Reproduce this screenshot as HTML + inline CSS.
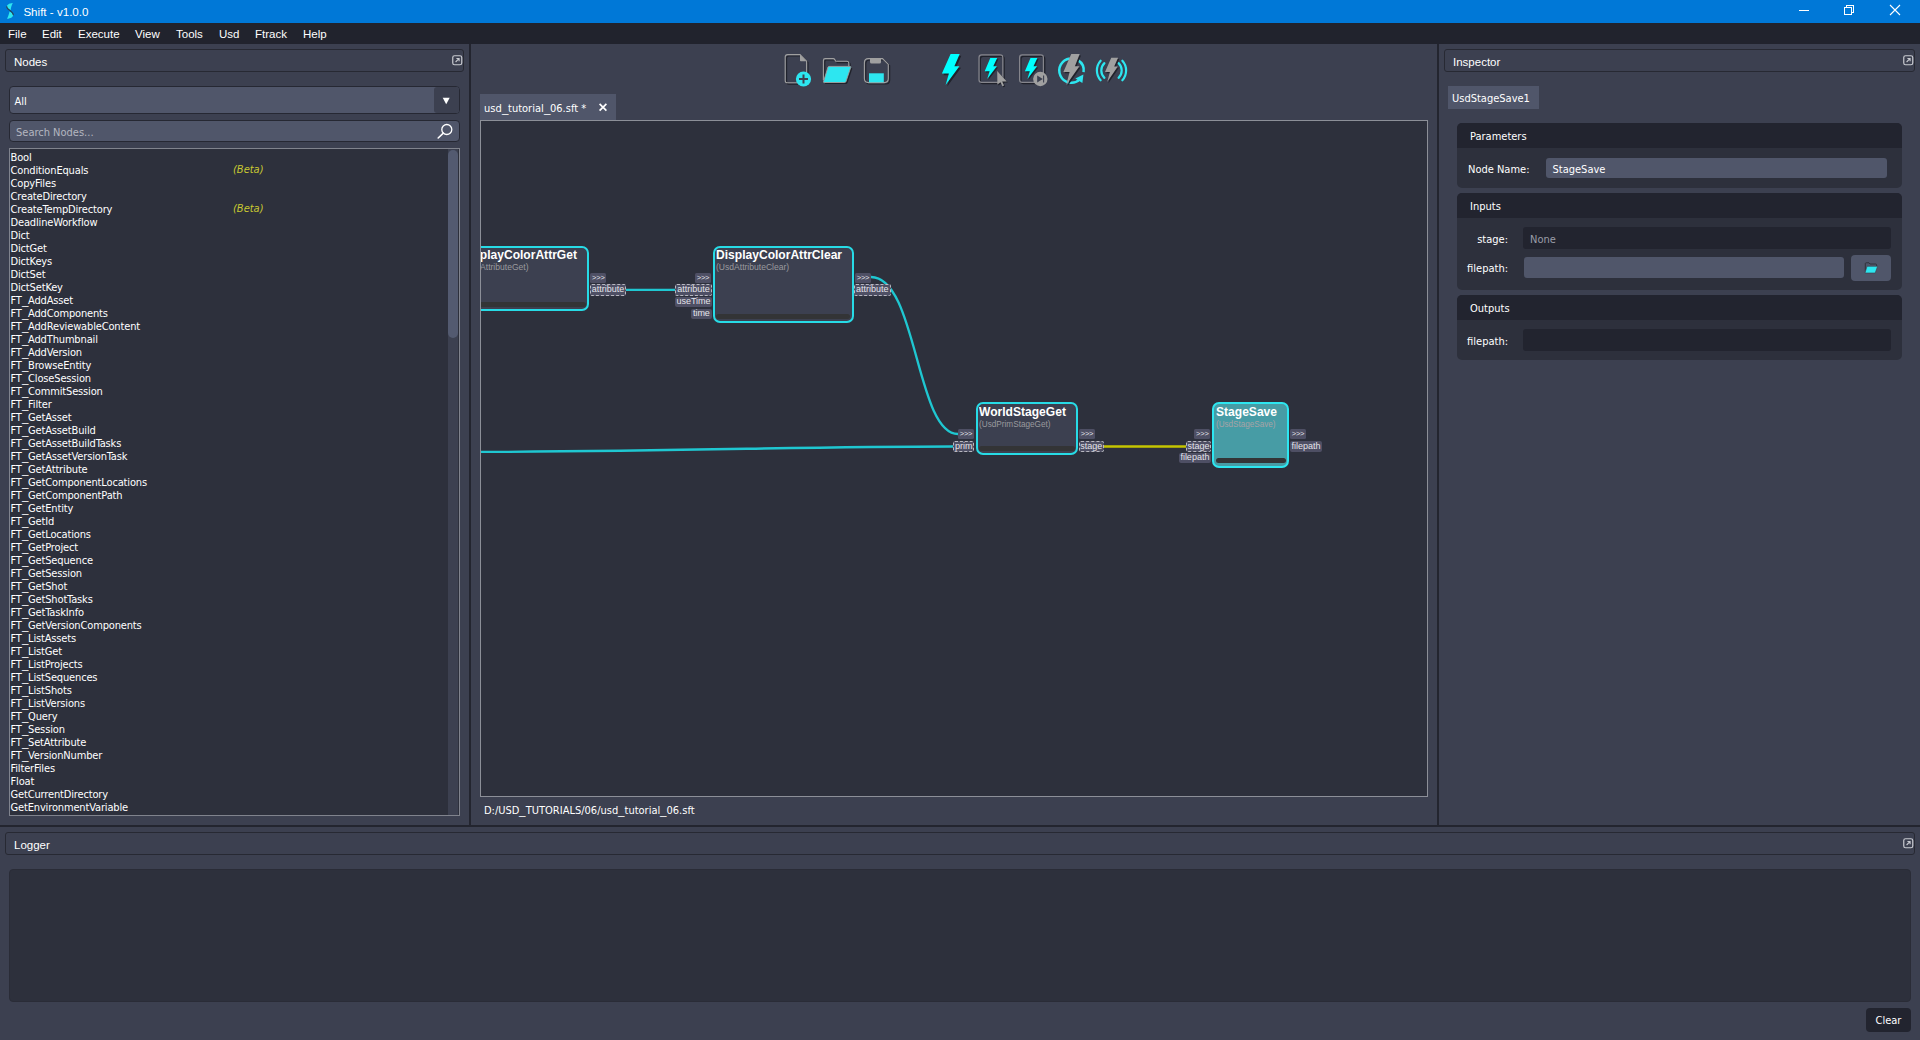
<!DOCTYPE html>
<html>
<head>
<meta charset="utf-8">
<title>Shift - v1.0.0</title>
<style>
*{box-sizing:border-box;margin:0;padding:0}
html,body{width:1920px;height:1040px;overflow:hidden;background:#3c4050}
body{position:relative;font-family:"DejaVu Sans Condensed","Liberation Sans",sans-serif;font-size:11px;color:#fff;line-height:13px}
.abs{position:absolute}
#titlebar{left:0;top:0;width:1920px;height:23px;background:#0078d7}
#titlebar .t{left:23.4px;top:0px;height:23px;line-height:23px;font-size:11.6px;font-family:"Liberation Sans",sans-serif;color:#fff;white-space:nowrap}
#menubar{left:0;top:23px;width:1920px;height:21px;background:#21232d}
#menubar span{position:absolute;top:0;height:21px;line-height:22px;font-family:"Liberation Sans",sans-serif;font-size:11.5px;color:#fff}
.dockhdr{border:1px solid #272933;border-radius:3px;background:#3c4050;height:23px}
.dockhdr .t{position:absolute;left:8px;top:1.5px;line-height:21px;font-family:"Liberation Sans",sans-serif;font-size:11.5px}
.vsep{background:#23252f;width:2px}
.hsep{background:#23252f;height:2px}
#nodelist{left:9px;top:148px;width:451px;height:668px;background:#2d303c;border:1px solid #80838d;overflow:hidden}
#nodelist div.r{position:absolute;left:0.5px;height:13px;line-height:13px;white-space:nowrap;letter-spacing:-0.15px}
#nodelist .beta{position:absolute;left:223px;color:#c8c832;font-style:italic;height:13px;line-height:13px}
.u{display:inline-block;width:6.3px;transform:scaleX(1.3);transform-origin:0 0;letter-spacing:0}
.grp{background:#2d303c;border-radius:5px;overflow:hidden}
.gh{position:absolute;left:0;top:0;right:0;height:25px;background:#22242f;line-height:27px;padding-left:13px}
.lbl{white-space:nowrap}
.inp{background:#50566a;border-radius:3px}
.inp span{position:absolute;left:6.5px;top:2px;line-height:19px}
.ro{background:#22242f;border-radius:3px}
.ro span{position:absolute;left:7px;top:1px;line-height:23px;color:#9a9da8}
#graph{left:481px;top:121px;width:946px;height:675px;overflow:hidden;font-family:"Liberation Sans",sans-serif}
.node{position:absolute;border-radius:7px;overflow:hidden}
.nt{position:absolute;top:0px;font-weight:bold;font-size:13px;line-height:15px;white-space:nowrap;color:#fff;transform:scaleX(.928);transform-origin:0 0}
.ns{position:absolute;top:14px;font-size:9.5px;line-height:12px;white-space:nowrap;transform-origin:0 0}
.nb{position:absolute;left:1.5px;right:1.5px;bottom:2.5px;height:5px;background:#333436;border-radius:2.5px}
.pt{position:absolute;background:#4e4f64;border-radius:2px;font-size:9px;text-align:center;white-space:nowrap;color:#e4e4ea}
.pa{position:absolute;background:#4e4f64;border-radius:1.5px;font-size:7.5px;text-align:center;white-space:nowrap;color:#e4e4ea;letter-spacing:-0.2px}
</style>
</head>
<body>

<div id="titlebar" class="abs">
<svg class="abs" style="left:4px;top:1px" width="14" height="20" viewBox="4 1 14 20"><path d="M12.8 2.9 C9 3.1 6.4 5 6.9 7.2 C7.6 9.2 9.8 9.9 10.6 10.3 C10.9 7.6 11.6 5.4 12.8 2.9 Z" fill="#2de6f0"/><path d="M7 18.7 C10.6 18.5 13.7 16.6 13.2 14.4 C12.7 12.6 10.6 11.9 9.5 11.4 C9.1 13.9 8.3 16.1 7 18.7 Z" fill="#2de6f0"/><path d="M6.7 6.2 C6.3 9.8 13.2 10.8 13.4 15.2" fill="none" stroke="#26435c" stroke-width="1.1"/></svg>
<div class="t abs">Shift - v1.0.0</div>
<svg class="abs" style="left:1790px;top:0" width="130" height="23" viewBox="1790 0 130 23" shape-rendering="crispEdges"><path d="M1799 10.5 H1809" stroke="#fff" stroke-width="1"/><path d="M1846.5 7 V5.5 H1853.5 V12.5 H1852" fill="none" stroke="#fff" stroke-width="1"/><rect x="1844.5" y="7.5" width="7" height="7" fill="none" stroke="#fff" stroke-width="1"/><path d="M1890 5 L1900 15 M1900 5 L1890 15" stroke="#fff" stroke-width="1.1" shape-rendering="geometricPrecision"/></svg>
</div>
<div id="menubar" class="abs">
<span style="left:8px">File</span><span style="left:42px">Edit</span><span style="left:78px">Execute</span><span style="left:135px">View</span><span style="left:176px">Tools</span><span style="left:219px">Usd</span><span style="left:255px">Ftrack</span><span style="left:303px">Help</span>
</div>
<div class="abs dockhdr" style="left:5px;top:49px;width:459px"><span class="t">Nodes</span></div>
<svg class="abs" style="left:452px;top:55px" width="11" height="11" viewBox="0 0 11 11"><rect x="0.75" y="0.75" width="9" height="9" rx="1.8" fill="none" stroke="#c8cad0" stroke-width="1.2"/><path d="M3.6 7 L6.9 3.7 M4.4 3.5 H7.1 V6.2" fill="none" stroke="#c8cad0" stroke-width="1.1"/></svg>
<div class="abs vsep" style="left:469px;top:44px;height:782px"></div>
<div class="abs vsep" style="left:1437px;top:44px;height:782px"></div>
<div class="abs hsep" style="left:0;top:825px;width:1920px"></div>
<div class="abs" style="left:9px;top:86px;width:451px;height:28px;background:#50566a;border:1px solid #262833;border-radius:4px;overflow:hidden">
<div class="abs" style="left:4.5px;top:1px;line-height:27px">All</div>
<div class="abs" style="left:424px;top:0;width:26px;height:26px;background:#3c4050;border-radius:3px"></div>
<svg class="abs" style="left:432.3px;top:10px" width="9" height="8" viewBox="0 0 9 8"><path d="M0.7 0.8 L7.7 0.8 L4.2 7.2 Z" fill="#fff"/></svg>
</div>
<div class="abs" style="left:9px;top:120px;width:451px;height:22px;background:#50566a;border:1px solid #262833;border-radius:4px">
<div class="abs" style="left:6px;top:1px;line-height:21px;color:#b4b7c0">Search Nodes...</div>
<svg class="abs" style="left:425px;top:1px" width="20" height="18" viewBox="0 0 20 18"><circle cx="11.8" cy="7.5" r="5" fill="none" stroke="#fff" stroke-width="1.3"/><path d="M8.3 11.2 L3.2 16" stroke="#fff" stroke-width="1.6" stroke-linecap="round"/></svg>
</div>
<div id="nodelist" class="abs">
<div class="r" style="top:2px">Bool</div>
<div class="r" style="top:15px">ConditionEquals</div>
<div class="beta" style="top:14px">(Beta)</div>
<div class="r" style="top:28px">CopyFiles</div>
<div class="r" style="top:41px">CreateDirectory</div>
<div class="r" style="top:54px">CreateTempDirectory</div>
<div class="beta" style="top:53px">(Beta)</div>
<div class="r" style="top:67px">DeadlineWorkflow</div>
<div class="r" style="top:80px">Dict</div>
<div class="r" style="top:93px">DictGet</div>
<div class="r" style="top:106px">DictKeys</div>
<div class="r" style="top:119px">DictSet</div>
<div class="r" style="top:132px">DictSetKey</div>
<div class="r" style="top:145px">FT<span class="u">_</span>AddAsset</div>
<div class="r" style="top:158px">FT<span class="u">_</span>AddComponents</div>
<div class="r" style="top:171px">FT<span class="u">_</span>AddReviewableContent</div>
<div class="r" style="top:184px">FT<span class="u">_</span>AddThumbnail</div>
<div class="r" style="top:197px">FT<span class="u">_</span>AddVersion</div>
<div class="r" style="top:210px">FT<span class="u">_</span>BrowseEntity</div>
<div class="r" style="top:223px">FT<span class="u">_</span>CloseSession</div>
<div class="r" style="top:236px">FT<span class="u">_</span>CommitSession</div>
<div class="r" style="top:249px">FT<span class="u">_</span>Filter</div>
<div class="r" style="top:262px">FT<span class="u">_</span>GetAsset</div>
<div class="r" style="top:275px">FT<span class="u">_</span>GetAssetBuild</div>
<div class="r" style="top:288px">FT<span class="u">_</span>GetAssetBuildTasks</div>
<div class="r" style="top:301px">FT<span class="u">_</span>GetAssetVersionTask</div>
<div class="r" style="top:314px">FT<span class="u">_</span>GetAttribute</div>
<div class="r" style="top:327px">FT<span class="u">_</span>GetComponentLocations</div>
<div class="r" style="top:340px">FT<span class="u">_</span>GetComponentPath</div>
<div class="r" style="top:353px">FT<span class="u">_</span>GetEntity</div>
<div class="r" style="top:366px">FT<span class="u">_</span>GetId</div>
<div class="r" style="top:379px">FT<span class="u">_</span>GetLocations</div>
<div class="r" style="top:392px">FT<span class="u">_</span>GetProject</div>
<div class="r" style="top:405px">FT<span class="u">_</span>GetSequence</div>
<div class="r" style="top:418px">FT<span class="u">_</span>GetSession</div>
<div class="r" style="top:431px">FT<span class="u">_</span>GetShot</div>
<div class="r" style="top:444px">FT<span class="u">_</span>GetShotTasks</div>
<div class="r" style="top:457px">FT<span class="u">_</span>GetTaskInfo</div>
<div class="r" style="top:470px">FT<span class="u">_</span>GetVersionComponents</div>
<div class="r" style="top:483px">FT<span class="u">_</span>ListAssets</div>
<div class="r" style="top:496px">FT<span class="u">_</span>ListGet</div>
<div class="r" style="top:509px">FT<span class="u">_</span>ListProjects</div>
<div class="r" style="top:522px">FT<span class="u">_</span>ListSequences</div>
<div class="r" style="top:535px">FT<span class="u">_</span>ListShots</div>
<div class="r" style="top:548px">FT<span class="u">_</span>ListVersions</div>
<div class="r" style="top:561px">FT<span class="u">_</span>Query</div>
<div class="r" style="top:574px">FT<span class="u">_</span>Session</div>
<div class="r" style="top:587px">FT<span class="u">_</span>SetAttribute</div>
<div class="r" style="top:600px">FT<span class="u">_</span>VersionNumber</div>
<div class="r" style="top:613px">FilterFiles</div>
<div class="r" style="top:626px">Float</div>
<div class="r" style="top:639px">GetCurrentDirectory</div>
<div class="r" style="top:652px">GetEnvironmentVariable</div>
<div class="abs" style="left:438px;top:0;width:10px;height:666px;background:#3c4050"></div><div class="abs" style="left:438px;top:1px;width:10px;height:188px;background:#535a70;border-radius:5px"></div>
</div><svg class="abs" style="left:776px;top:48px" width="360" height="44" viewBox="776 48 360 44"><path d="M787.6 54.6 H800 L806.6 61.2 V80.4 Q806.6 82.8 804.2 82.8 H787.6 Q785.2 82.8 785.2 80.4 V57 Q785.2 54.6 787.6 54.6 Z" fill="none" stroke="#20222b" stroke-width="1.1" transform="translate(1.4 1.4)"/><path d="M787.6 54.6 H800 L806.6 61.2 V80.4 Q806.6 82.8 804.2 82.8 H787.6 Q785.2 82.8 785.2 80.4 V57 Q785.2 54.6 787.6 54.6 Z" fill="none" stroke="#a0a0a0" stroke-width="1.1"/><path d="M800 54.6 L806.6 61.2 H800.8 Q800 61.2 800 60.4 Z" fill="#a0a0a0"/><circle cx="803.5" cy="79" r="7.6" fill="#2de6f0"/><path d="M799 79 H808 M803.5 74.5 V83.5" stroke="#3c4050" stroke-width="2"/><path d="M829 66.4 H850 Q851 66.4 850.7 67.4 L846 81.5 Q845.6 82.5 844.6 82.5 H824.2 Q823.2 82.5 823.5 81.5 L828 67.2 Q828.3 66.4 829 66.4 Z" fill="#20222b" transform="translate(1.5 1.5)"/><path d="M823.4 80 V60.4 Q823.4 58.6 825.2 58.6 H833.2 Q834.2 58.6 834.8 59.6 L835.8 61.2 H846.8 Q848.8 61.2 848.8 63.2 V66" fill="none" stroke="#20222b" stroke-width="1.1" transform="translate(1.4 1.4)"/><path d="M823.4 80 V60.4 Q823.4 58.6 825.2 58.6 H833.2 Q834.2 58.6 834.8 59.6 L835.8 61.2 H846.8 Q848.8 61.2 848.8 63.2 V66" fill="none" stroke="#a0a0a0" stroke-width="1.1"/><path d="M829 66.4 H850 Q851 66.4 850.7 67.4 L846 81.5 Q845.6 82.5 844.6 82.5 H824.2 Q823.2 82.5 823.5 81.5 L828 67.2 Q828.3 66.4 829 66.4 Z" fill="#2de6f0" stroke="#a0a0a0" stroke-width="0.9"/><path d="M868.4 58.6 H882.5 L888.3 64.4 V78.6 Q888.3 82.6 884.3 82.6 H868.4 Q864.4 82.6 864.4 78.6 V62.6 Q864.4 58.6 868.4 58.6 Z" fill="none" stroke="#20222b" stroke-width="1.1" transform="translate(1.4 1.4)"/><path d="M868.4 58.6 H882.5 L888.3 64.4 V78.6 Q888.3 82.6 884.3 82.6 H868.4 Q864.4 82.6 864.4 78.6 V62.6 Q864.4 58.6 868.4 58.6 Z" fill="none" stroke="#a0a0a0" stroke-width="1.1"/><path d="M870 58.6 H881 V62 Q881 63.6 879.4 63.6 H871.6 Q870 63.6 870 62 Z" fill="#a0a0a0"/><rect x="869" y="73.3" width="14.8" height="9" fill="#2de6f0"/><path d="M950.60 54.10 L959.70 54.10 L954.40 66.20 L959.40 66.20 L945.60 84.90 L948.90 73.60 L941.90 73.60 Z" fill="#20222b" transform="translate(1.6 1.6)"/><path d="M950.60 54.10 L959.70 54.10 L954.40 66.20 L959.40 66.20 L945.60 84.90 L948.90 73.60 L941.90 73.60 Z" fill="#00ffff"/><rect x="979.0" y="54.9" width="23.8" height="27.4" rx="2.6" fill="none" stroke="#20222b" stroke-width="1.2" transform="translate(1.4 1.4)"/><rect x="979.0" y="54.9" width="23.8" height="27.4" rx="2.6" fill="none" stroke="#85858c" stroke-width="1.2"/><path d="M990.30 58.00 L997.20 58.00 L993.30 66.30 L996.90 66.30 L987.20 78.90 L989.60 71.20 L984.70 71.20 Z" fill="#20222b" transform="translate(1.2 1.2)"/><path d="M990.30 58.00 L997.20 58.00 L993.30 66.30 L996.90 66.30 L987.20 78.90 L989.60 71.20 L984.70 71.20 Z" fill="#00ffff"/><path d="M997.2 71 L997.4 84.6 L1000.5 82.3 L1002.4 86.2 L1004.1 85.4 L1002.2 81.6 L1006.8 81.4 Z" fill="#20222b" transform="translate(1 1)"/><path d="M997.2 71 L997.4 84.6 L1000.5 82.3 L1002.4 86.2 L1004.1 85.4 L1002.2 81.6 L1006.8 81.4 Z" fill="#a0a0a0"/><rect x="1019.6" y="54.9" width="23.8" height="27.4" rx="2.6" fill="none" stroke="#20222b" stroke-width="1.2" transform="translate(1.4 1.4)"/><rect x="1019.6" y="54.9" width="23.8" height="27.4" rx="2.6" fill="none" stroke="#85858c" stroke-width="1.2"/><path d="M1030.50 58.00 L1037.40 58.00 L1033.50 66.30 L1037.10 66.30 L1027.40 78.90 L1029.80 71.20 L1024.90 71.20 Z" fill="#20222b" transform="translate(1.2 1.2)"/><path d="M1030.50 58.00 L1037.40 58.00 L1033.50 66.30 L1037.10 66.30 L1027.40 78.90 L1029.80 71.20 L1024.90 71.20 Z" fill="#00ffff"/><circle cx="1040.3" cy="79" r="7.2" fill="#a0a0a0"/><path d="M1037.2 75.6 L1042.8 79 L1037.2 82.4 Z" fill="#3c4050"/><path d="M1043.6 75.4 V82.6" stroke="#3c4050" stroke-width="1.1"/><path d="M1077.97 60.15 A12.2 12.2 0 0 1 1083.58 72.20" fill="none" stroke="#2de6f0" stroke-width="2.5"/><path d="M1079.66 79.57 A12.2 12.2 0 1 1 1069.80 58.42" fill="none" stroke="#2de6f0" stroke-width="2.5"/><path d="M1083.4 74.6 L1082.4 83 L1075.4 78.4 Z" fill="#2de6f0"/><path d="M1071.25 54.10 L1079.70 54.10 L1074.90 66.20 L1079.40 66.20 L1066.25 84.90 L1069.60 72.00 L1063.40 72.00 Z" fill="#20222b" transform="translate(1.3 1.3)"/><path d="M1071.25 54.10 L1079.70 54.10 L1074.90 66.20 L1079.40 66.20 L1066.25 84.90 L1069.60 72.00 L1063.40 72.00 Z" fill="#a0a0a0"/><path d="M1122.35 60.73 A14.6 14.6 0 0 1 1122.35 80.27" fill="none" stroke="#2de6f0" stroke-width="2.2" stroke-linecap="round"/><path d="M1100.65 80.27 A14.6 14.6 0 0 1 1100.65 60.73" fill="none" stroke="#2de6f0" stroke-width="2.2" stroke-linecap="round"/><path d="M1118.59 63.16 A10.2 10.2 0 0 1 1118.59 77.84" fill="none" stroke="#2de6f0" stroke-width="2.2" stroke-linecap="round"/><path d="M1104.41 77.84 A10.2 10.2 0 0 1 1104.41 63.16" fill="none" stroke="#2de6f0" stroke-width="2.2" stroke-linecap="round"/><path d="M1111.25 57.70 L1118.10 57.70 L1114.20 66.50 L1117.80 66.50 L1107.20 82.00 L1109.90 72.00 L1105.00 72.00 Z" fill="#20222b" transform="translate(1.2 1.2)"/><path d="M1111.25 57.70 L1118.10 57.70 L1114.20 66.50 L1117.80 66.50 L1107.20 82.00 L1109.90 72.00 L1105.00 72.00 Z" fill="#a0a0a0"/></svg>
<div class="abs" style="left:480px;top:94px;width:136px;height:26px;background:#50566a"></div>
<div class="abs" style="left:484px;top:96px;line-height:26px;height:26px;white-space:nowrap">usd<span class="u">_</span>tutorial<span class="u">_</span>06.sft *</div>
<svg class="abs" style="left:598px;top:102px" width="10" height="10" viewBox="0 0 10 10"><path d="M1.6 1.8 L8.4 8.6 M8.4 1.8 L1.6 8.6" stroke="#fff" stroke-width="1.7" fill="none"/></svg>
<div class="abs" style="left:480px;top:120px;width:948px;height:677px;border:1px solid #8c8f98;background:#2d303c"></div>
<div id="graph" class="abs"><svg class="abs" style="left:0;top:0" width="947" height="676" viewBox="481 121 947 676"><path d="M626 289.8 L675.5 289.8" stroke="#1fc7d1" stroke-width="2.3" fill="none"/><path d="M871 277 C917 277 916 434 958 434" stroke="#1fc7d1" stroke-width="2.3" fill="none"/><path d="M470 452 C700 451 800 446.5 953 446.5" stroke="#1fc7d1" stroke-width="2.3" fill="none"/><path d="M1103.5 446.5 L1186.5 446.5" stroke="#c4c400" stroke-width="2.3" fill="none"/></svg>
<div class="node" style="left:-41.0px;top:125.0px;width:149.0px;height:65.0px;border:2px solid #27dbe6;background:#3c4050"><div class="nt" style="left:19.2px;top:-0.8px">DisplayColorAttrGet</div><div class="ns" style="left:19.7px;top:13px;color:#9a9a9e;transform:scaleX(0.9)">(UsdAttributeGet)</div><div class="nb"></div></div>
<div class="node" style="left:231.5px;top:125.0px;width:141.2px;height:77.0px;border:2px solid #27dbe6;background:#3c4050"><div class="nt" style="left:1.2000000000000002px;top:-0.8px">DisplayColorAttrClear</div><div class="ns" style="left:1.7000000000000002px;top:13px;color:#9a9a9e;transform:scaleX(0.9)">(UsdAttributeClear)</div><div class="nb"></div></div>
<div class="node" style="left:494.6px;top:281.2px;width:102.5px;height:53.0px;border:2px solid #27dbe6;background:#3c4050"><div class="nt" style="left:1.2000000000000002px;top:0px">WorldStageGet</div><div class="ns" style="left:1.7000000000000002px;top:14px;color:#9a9a9e;transform:scaleX(0.863)">(UsdPrimStageGet)</div><div class="nb"></div></div>
<div class="node" style="left:731.0px;top:281.2px;width:77.4px;height:65.5px;border:2.5px solid #2de6f0;background:#479ca5"><div class="nt" style="left:1.5px;top:0px">StageSave</div><div class="ns" style="left:2.0px;top:14px;color:#a8a3a6;transform:scaleX(0.853)">(UsdStageSave)</div><div class="nb"></div></div>
<div class="pa" style="left:109.4px;top:152.0px;width:16.0px;height:9.5px;line-height:9.5px;">&gt;&gt;&gt;</div>
<div class="pt" style="left:108.8px;top:163.2px;width:36.2px;height:11.6px;border:1px dashed #b8b8c0;line-height:9.6px;">attribute</div>
<div class="pa" style="left:214.0px;top:152.0px;width:16.0px;height:9.5px;line-height:9.5px;">&gt;&gt;&gt;</div>
<div class="pt" style="left:194.4px;top:163.2px;width:36.2px;height:11.6px;border:1px dashed #b8b8c0;line-height:9.6px;">attribute</div>
<div class="pt" style="left:194.4px;top:176.0px;width:36.2px;height:9.6px;line-height:9.6px;">useTime</div>
<div class="pt" style="left:210.2px;top:188.0px;width:20.4px;height:9.6px;line-height:9.6px;">time</div>
<div class="pa" style="left:374.0px;top:152.0px;width:16.0px;height:9.5px;line-height:9.5px;">&gt;&gt;&gt;</div>
<div class="pt" style="left:373.0px;top:163.2px;width:36.6px;height:11.6px;border:1px dashed #b8b8c0;line-height:9.6px;">attribute</div>
<div class="pa" style="left:477.0px;top:308.4px;width:16.0px;height:9.5px;line-height:9.5px;">&gt;&gt;&gt;</div>
<div class="pt" style="left:472.0px;top:320.0px;width:21.4px;height:11.0px;border:1px dashed #b8b8c0;line-height:9.0px;">prim</div>
<div class="pa" style="left:598.0px;top:308.4px;width:16.0px;height:9.5px;line-height:9.5px;">&gt;&gt;&gt;</div>
<div class="pt" style="left:597.8px;top:320.0px;width:25.0px;height:11.0px;border:1px dashed #b8b8c0;line-height:9.0px;">stage</div>
<div class="pa" style="left:713.4px;top:308.4px;width:16.0px;height:9.5px;line-height:9.5px;">&gt;&gt;&gt;</div>
<div class="pt" style="left:705.2px;top:320.0px;width:24.8px;height:11.0px;border:1px dashed #b8b8c0;line-height:9.0px;">stage</div>
<div class="pt" style="left:697.8px;top:332.3px;width:32.2px;height:9.9px;line-height:9.9px;">filepath</div>
<div class="pa" style="left:809.0px;top:308.4px;width:16.0px;height:9.5px;line-height:9.5px;">&gt;&gt;&gt;</div>
<div class="pt" style="left:809.0px;top:320.0px;width:32.2px;height:11.0px;line-height:11.0px;">filepath</div></div>
<div class="abs" style="left:484px;top:804px;line-height:14px;white-space:nowrap">D:/USD<span class="u">_</span>TUTORIALS/06/usd<span class="u">_</span>tutorial<span class="u">_</span>06.sft</div>

<div class="abs dockhdr" style="left:1444px;top:49px;width:471px"><span class="t">Inspector</span></div>
<svg class="abs" style="left:1903px;top:55px" width="11" height="11" viewBox="0 0 11 11"><rect x="0.75" y="0.75" width="9" height="9" rx="1.8" fill="none" stroke="#c8cad0" stroke-width="1.2"/><path d="M3.6 7 L6.9 3.7 M4.4 3.5 H7.1 V6.2" fill="none" stroke="#c8cad0" stroke-width="1.1"/></svg>
<div class="abs" style="left:1448px;top:86px;width:91px;height:23px;background:#50566a"></div>
<div class="abs" style="left:1452px;top:87px;line-height:24px;white-space:nowrap">UsdStageSave1</div>
<div class="abs grp" style="left:1457px;top:123px;width:445px;height:65px"><div class="gh">Parameters</div></div>
<div class="abs lbl" style="left:1468px;top:159px;line-height:21px">Node Name:</div>
<div class="abs inp" style="left:1546px;top:158px;width:341px;height:20px"><span>StageSave</span></div>
<div class="abs grp" style="left:1457px;top:193px;width:445px;height:97px"><div class="gh">Inputs</div></div>
<div class="abs lbl" style="left:1457px;top:228px;width:51px;text-align:right;line-height:23px">stage:</div>
<div class="abs ro" style="left:1523px;top:227px;width:368px;height:22px"><span>None</span></div>
<div class="abs lbl" style="left:1457px;top:258px;width:51px;text-align:right;line-height:22px">filepath:</div>
<div class="abs inp" style="left:1523.5px;top:257.4px;width:320.6px;height:20.7px"></div>
<div class="abs" style="left:1851px;top:255px;width:40px;height:26px;background:#50566a;border-radius:4px"></div>
<svg class="abs" style="left:1863px;top:261px" width="17" height="14" viewBox="0 0 17 14"><path d="M2.3 10.5 V2.6 Q2.3 1.8 3.1 1.8 H6 L7 3 H12.6 Q13.6 3 13.6 4 V5.5" fill="none" stroke="#30323c" stroke-width="1"/><path d="M4 5.3 H14.6 L12.2 12 H2 Z" fill="#2de6f0" stroke="#3a3c48" stroke-width="0.6"/></svg>
<div class="abs grp" style="left:1457px;top:295px;width:445px;height:65px"><div class="gh">Outputs</div></div>
<div class="abs lbl" style="left:1457px;top:330px;width:51px;text-align:right;line-height:23px">filepath:</div>
<div class="abs ro" style="left:1523px;top:329px;width:368px;height:22px"></div>

<div class="abs dockhdr" style="left:5px;top:832px;width:1910px"><span class="t">Logger</span></div>
<svg class="abs" style="left:1903px;top:838px" width="11" height="11" viewBox="0 0 11 11"><rect x="0.75" y="0.75" width="9" height="9" rx="1.8" fill="none" stroke="#c8cad0" stroke-width="1.2"/><path d="M3.6 7 L6.9 3.7 M4.4 3.5 H7.1 V6.2" fill="none" stroke="#c8cad0" stroke-width="1.1"/></svg>
<div class="abs" style="left:9px;top:869px;width:1902px;height:133px;background:#2d303c;border:1px solid #2a2c37;border-radius:4px"></div>
<div class="abs" style="left:1866px;top:1008px;width:45px;height:24px;background:#22242f;border-radius:4px;text-align:center;line-height:25px">Clear</div>

</body>
</html>
